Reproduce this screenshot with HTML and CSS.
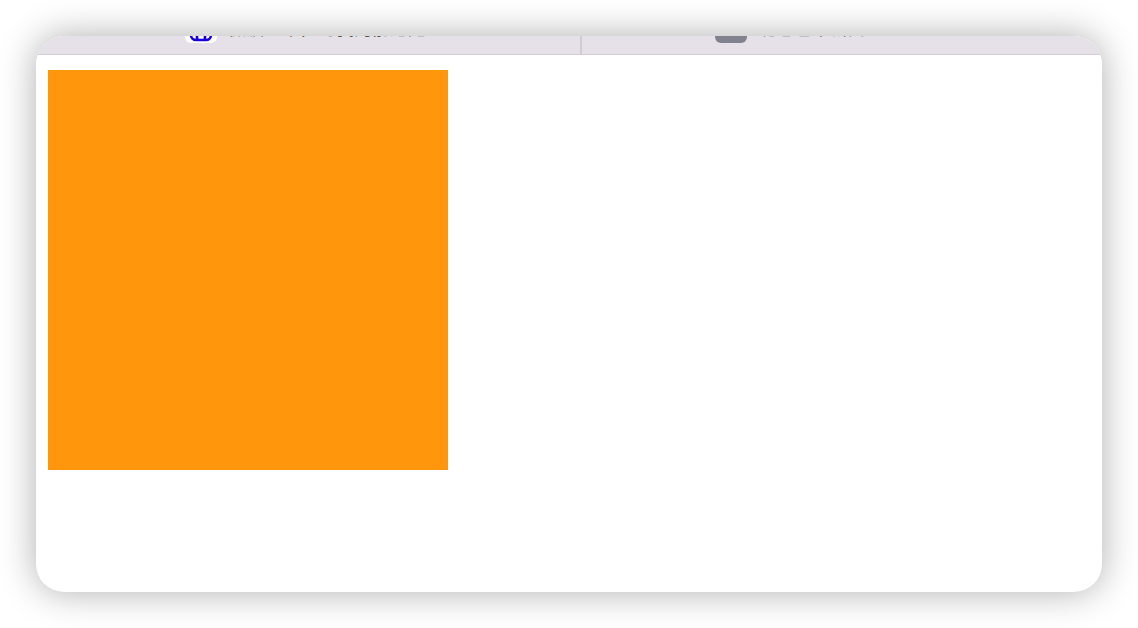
FILE: index.html
```html
<!DOCTYPE html>
<html lang="en">
<head>
    <meta charset="UTF-8">
    <title>Tabs</title>
    <link rel="stylesheet" href="styles.css">
</head>
<body>
    <div class="window">
        <div class="tab-bar">
            <div class="tab tab-first">
                <span class="tab-icon icon-light">
                    <svg class="tab-logo" width="24" height="32" viewBox="0 0 24 32"><path d="M2 24a5 5 0 0 0 5 5h10a5 5 0 0 0 5-5M8 24v3a2 2 0 0 0 2 2h4a2 2 0 0 0 2-2v-3" fill="none" stroke="#1a00e0" stroke-width="2.6"/></svg>
                </span>
                <span class="tab-title">微波一中，为我的前途无</span>
            </div>
            <div class="tab tab-second">
                <span class="tab-icon icon-grey"></span>
                <span class="tab-title">北卷也中新闻</span>
            </div>
        </div>
        <div class="content">
            <div class="block"></div>
        </div>
    </div>
</body>
</html>
```

FILE: styles.css
```css
html, body {
    height: 100%;
}

body {
    margin: 0;
    padding: 36px;
    box-sizing: border-box;
    background: #fff;
    font-family: "Noto Sans CJK SC", "Liberation Sans", sans-serif;
}

.window {
    height: 556px;
    background: #fff;
    border-radius: 28px;
    overflow: hidden;
    box-shadow: 0 0 36px rgba(0,0,0,0.32);
}

.tab-bar {
    display: flex;
    height: 18px;
    background: #e6e1e8;
    border-bottom: 1px solid #d2ced4;
    overflow: hidden;
}

.tab {
    display: flex;
    align-items: flex-start;
}

.tab-first {
    width: 546px;
    padding-left: 149px;
    box-sizing: border-box;
    border-right: 2px solid #d0ccd3;
}

.tab-second {
    padding-left: 133px;
}

.tab-icon {
    display: block;
    width: 32px;
    height: 32px;
    margin-top: -25px;
    border-radius: 6px;
    flex-shrink: 0;
}

.icon-light {
    background: #fff;
}

.tab-logo {
    display: block;
    margin: 0 auto;
}

.icon-grey {
    background: #82828e;
}

.tab-title {
    margin-top: -19px;
    margin-left: 11px;
    font-size: 18px;
    line-height: 20px;
    color: #555;
    white-space: nowrap;
}

.content {
    padding: 15px 12px;
}

.block {
    width: 400px;
    height: 400px;
    background: #ff960b;
}
```
